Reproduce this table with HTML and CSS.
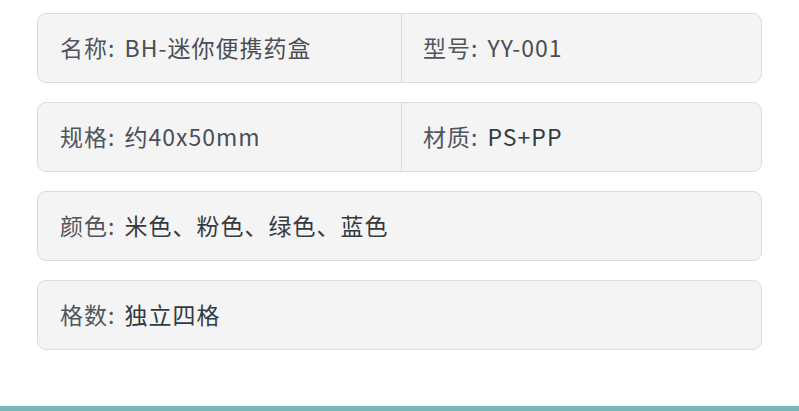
FILE: index.html
```html
<!DOCTYPE html>
<html lang="zh-CN">
<head>
<meta charset="utf-8">
<link rel="stylesheet" href="styles.css">
</head>
<body>
<div class="page">
  <div class="list">
    <div class="card split">
      <div class="cell"><p class="text"><span class="label">名称:</span> <span class="value">BH-迷你便携药盒</span></p></div>
      <div class="cell"><p class="text"><span class="label">型号:</span> <span class="value">YY-001</span></p></div>
    </div>
    <div class="card split">
      <div class="cell"><p class="text"><span class="label">规格:</span> <span class="value">约40x50mm</span></p></div>
      <div class="cell"><p class="text"><span class="label">材质:</span> <span class="value dark">PS+PP</span></p></div>
    </div>
    <div class="card">
      <div class="cell"><p class="text"><span class="label">颜色:</span> <span class="value dark">米色、粉色、绿色、蓝色</span></p></div>
    </div>
    <div class="card">
      <div class="cell"><p class="text"><span class="label">格数:</span> <span class="value dark">独立四格</span></p></div>
    </div>
  </div>
  <div class="bar"></div>
</div>
</body>
</html>
```
FILE: styles.css
```css
html, body {
  margin: 0;
  padding: 0;
  background: #ffffff;
}
body {
  font-family: "Noto Sans CJK SC", "Noto Sans", sans-serif;
  width: 799px;
  height: 411px;
  overflow: hidden;
}
.page {
  height: 411px;
  display: flex;
  flex-direction: column;
}
.list {
  flex: 1;
  display: flex;
  flex-direction: column;
  gap: 19px;
  padding: 13px 37px 0 37px;
}
.card {
  height: 70px;
  box-sizing: border-box;
  border: 1px solid #dcdcdc;
  border-radius: 9px;
  background: #f4f4f4;
  display: grid;
  grid-template-columns: 1fr;
}
.card.split {
  grid-template-columns: 363px 1fr;
}
.cell {
  display: flex;
  align-items: center;
  padding-left: 22px;
  padding-bottom: 2px;
}
.card.split .cell + .cell {
  border-left: 1px solid #dcdcdc;
  padding-left: 21px;
}
.text {
  margin: 0;
  font-size: 23px;
  letter-spacing: 1px;
  word-spacing: 3px;
  line-height: 1;
  white-space: nowrap;
  color: #4a4f55;
}
.label {
  color: #51565c;
}
.value {
  color: #4a4f55;
}
.value.dark {
  color: #343a42;
}
.bar {
  height: 5px;
  background: #78b7b7;
}
```
